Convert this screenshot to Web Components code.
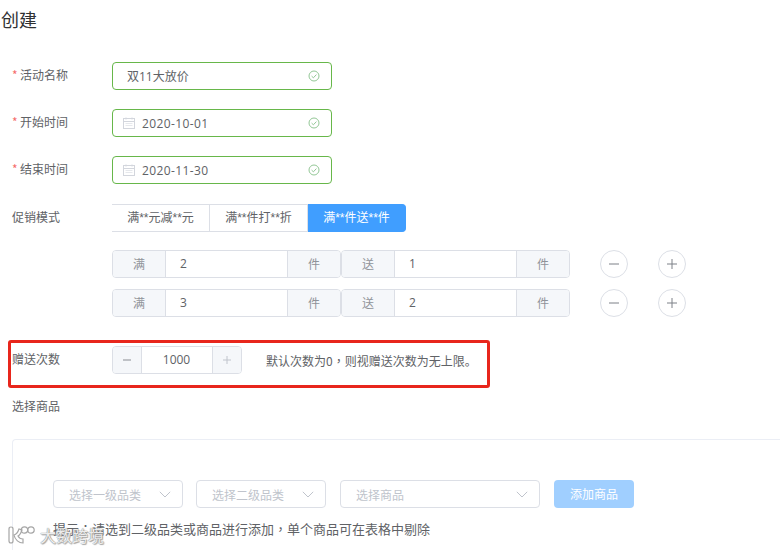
<!DOCTYPE html>
<html lang="zh">
<head>
<meta charset="utf-8">
<title>创建</title>
<style>
html,body{margin:0;padding:0;background:#fff;height:550px;overflow:hidden;}
body{font-family:"Noto Sans CJK SC","Noto Sans",sans-serif;font-size:12px;color:#606266;}
.p{font-family:"Noto Sans CJK TC",sans-serif;}
</style>
</head>
<body>
<promo-page>
  <form-row label="活动名称" required top="62"><text-field value="双11大放价"></text-field></form-row>
  <form-row label="开始时间" required top="19"><text-field value="2020-10-01" date></text-field></form-row>
  <form-row label="结束时间" required top="19"><text-field value="2020-11-30" date></text-field></form-row>
  <form-row label="促销模式" top="20">
    <seg-group options="满**元减**元|满**件打**折|满**件送**件" active="2"></seg-group>
  </form-row>
  <form-row top="18"><rule-row a="2" b="1"></rule-row></form-row>
  <form-row top="11"><rule-row a="3" b="2"></rule-row></form-row>
  <form-row label="赠送次数" top="29">
    <num-stepper value="1000"></num-stepper>
    <span style="margin-left:24px;color:#606266">默认次数为0<span class="p" lang="zh-Hant">，</span>则视赠送次数为无上限。</span>
  </form-row>
  <form-row label="选择商品" top="19"></form-row>
  <goods-card></goods-card>
</promo-page>

<script>
const checkIcon = `<svg width="12" height="12" viewBox="0 0 12 12" fill="none" stroke="#93c796" stroke-width="1"><circle cx="6" cy="6" r="5"/><path d="M3.6 6.1l1.8 1.7 3-3.2"/></svg>`;
const dateIcon = `<svg width="12" height="12" viewBox="0 0 12 12" fill="none" stroke="#d3d6dd" stroke-width="1"><rect x=".5" y="1.5" width="11" height="10"/><path d="M.5 4.500h11M3 .5v2M9 .5v2"/><path d="M2.500 6.500h7M2.500 8.500h7" stroke="#e6e8ec"/></svg>`;
const arrowIcon = `<svg width="12" height="7" viewBox="0 0 12 7" fill="none" stroke="#c0c4cc" stroke-width="1"><path d="M.8 .8L6 6l5.2-5.2"/></svg>`;

class PromoPage extends HTMLElement{
  constructor(){
    super();
    this.attachShadow({mode:'open'});
    this.shadowRoot.innerHTML=`
    <style>
    :host{display:block;position:relative;width:780px;height:550px;overflow:hidden;}
    h1{margin:0;height:0;font-size:18px;font-weight:400;line-height:24px;color:#303133;padding-left:1px;position:relative;top:7px;}
    .box{position:absolute;left:8px;top:340px;width:476px;height:42px;border:3px solid #e8261c;border-radius:3px;}
    .mark{position:absolute;left:8px;top:524px;display:flex;align-items:center;gap:5px;color:rgba(255,255,255,.85);font-size:16px;line-height:22px;
      text-shadow:0 0 1px #888,0 0 1px #999,1px 1px 1px #aaa;}
    .mark svg{display:block;}
    </style>
    <h1>创建</h1>
    <slot></slot>
    <div class="box"></div>
    <div class="mark">
      <svg width="27" height="20" viewBox="0 0 27 20" fill="#fff" stroke="#a6a6a6" stroke-width="1.2"><path d="M1 4q0-2 2-2t2 2v12q0 2-2 2t-2-2z"/><path d="M6 10c3-1 4-3 5-6l3 1c-1 3-2 5-4 6 1 2 3 3 5 3v4c-4 0-8-3-9-8z"/><circle cx="16.500" cy="5" r="3.200" fill="none"/><circle cx="23" cy="5" r="3.200" fill="none"/></svg>
      <span>大数跨境</span>
    </div>`;
  }
}

class FormRow extends HTMLElement{
  constructor(){
    super();
    this.attachShadow({mode:'open'});
    this.shadowRoot.innerHTML=`
    <style>
    :host{display:flex;height:28px;align-items:flex-start;padding-left:12px;}
    .label{width:100px;flex:none;line-height:26px;color:#606266;white-space:nowrap;}
    .star{display:inline-block;width:8px;color:#f56c6c;}
    .body{display:flex;align-items:center;height:28px;}
    </style>
    <div class="label"></div>
    <div class="body"><slot></slot></div>`;
  }
  connectedCallback(){
    const l=this.shadowRoot.querySelector('.label');
    const req=this.hasAttribute('required');
    l.innerHTML=(req?'<span class="star">*</span>':'')+(this.getAttribute('label')||'');
    this.style.marginTop=(this.getAttribute('top')||0)+'px';
  }
}

class TextField extends HTMLElement{
  constructor(){
    super();
    this.attachShadow({mode:'open'});
    this.shadowRoot.innerHTML=`
    <style>
    :host{display:flex;align-items:center;box-sizing:border-box;width:220px;height:28px;border:1px solid #67b74a;border-radius:4px;background:#fff;color:#606266;padding:0 11px 0 10px;font-family:"Open Sans","Noto Sans CJK SC",sans-serif;}
    .ic{display:flex;margin-right:7px;}
    .val{flex:1;}
    .val.date{letter-spacing:.4px;}
    .val.plain{padding-left:4px;}
    .ok{display:flex;}
    </style>
    <span class="ic"></span><span class="val"></span><span class="ok">${checkIcon}</span>`;
  }
  connectedCallback(){
    const v=this.shadowRoot.querySelector('.val');
    v.textContent=this.getAttribute('value');
    const ic=this.shadowRoot.querySelector('.ic');
    if(this.hasAttribute('date')){ ic.innerHTML=dateIcon; v.classList.add('date'); }
    else { ic.remove(); v.classList.add('plain'); }
  }
}

class SegGroup extends HTMLElement{
  constructor(){
    super();
    this.attachShadow({mode:'open'});
    this.shadowRoot.innerHTML=`
    <style>
    :host{display:flex;height:28px;font-family:"Liberation Sans","Noto Sans CJK SC",sans-serif;}
    div{box-sizing:border-box;width:98px;height:28px;line-height:26px;text-align:center;border:1px solid #dcdfe6;border-left:none;color:#606266;background:#fff;white-space:nowrap;}
    div:first-child{border-left:1px solid #dcdfe6;border-radius:4px 0 0 4px;}
    div:last-child{border-radius:0 4px 4px 0;}
    div.on{background:#409eff;border-color:#409eff;color:#fff;}
    </style>`;
  }
  connectedCallback(){
    const act=+this.getAttribute('active');
    this.getAttribute('options').split('|').forEach((t,i)=>{
      const d=document.createElement('div');
      d.textContent=t;
      if(i==act) d.className='on';
      this.shadowRoot.appendChild(d);
    });
  }
}

class AddonInput extends HTMLElement{
  constructor(){
    super();
    this.attachShadow({mode:'open'});
    this.shadowRoot.innerHTML=`
    <style>
    :host{display:flex;box-sizing:border-box;width:229px;height:28px;border:1px solid #dcdfe6;border-radius:4px;overflow:hidden;line-height:26px;color:#606266;}
    .add{width:52px;flex:none;text-align:center;background:#f5f7fa;color:#909399;}
    .pre{border-right:1px solid #dcdfe6;}
    .post{border-left:1px solid #dcdfe6;}
    .val{flex:1;padding-left:14px;font-family:"Open Sans",sans-serif;}
    </style>
    <span class="add pre"></span><span class="val"></span><span class="add post"></span>`;
  }
  connectedCallback(){
    this.shadowRoot.querySelector('.pre').textContent=this.getAttribute('pre');
    this.shadowRoot.querySelector('.val').textContent=this.getAttribute('value');
    this.shadowRoot.querySelector('.post').textContent=this.getAttribute('post');
  }
}

class RoundBtn extends HTMLElement{
  constructor(){
    super();
    this.attachShadow({mode:'open'});
    this.shadowRoot.innerHTML=`
    <style>
    :host{display:flex;align-items:center;justify-content:center;box-sizing:border-box;width:28px;height:28px;border:1px solid #dcdfe6;border-radius:50%;background:#fff;}
    svg{display:block;}
    </style>`;
  }
  connectedCallback(){
    const plus=this.getAttribute('kind')=='plus';
    this.shadowRoot.innerHTML+=`<svg width="10" height="10" viewBox="0 0 10 10" stroke="#7d8087" stroke-width="1"><path d="M0 5h10${plus?'M5 0v10':''}"/></svg>`;
  }
}

class RuleRow extends HTMLElement{
  constructor(){
    super();
    this.attachShadow({mode:'open'});
    this.shadowRoot.innerHTML=`
    <style>
    :host{display:flex;align-items:center;}
    .gap1{margin-left:30px;}
    .gap2{margin-left:30px;}
    </style>
    <addon-input pre="满" post="件" class="a"></addon-input>
    <addon-input pre="送" post="件" class="b"></addon-input>
    <round-btn kind="minus" class="gap1"></round-btn>
    <round-btn kind="plus" class="gap2"></round-btn>`;
  }
  connectedCallback(){
    this.shadowRoot.querySelector('.a').setAttribute('value',this.getAttribute('a'));
    this.shadowRoot.querySelector('.b').setAttribute('value',this.getAttribute('b'));
    this.shadowRoot.querySelector('.a').connectedCallback();
    this.shadowRoot.querySelector('.b').connectedCallback();
  }
}

class NumStepper extends HTMLElement{
  constructor(){
    super();
    this.attachShadow({mode:'open'});
    this.shadowRoot.innerHTML=`
    <style>
    :host{display:flex;box-sizing:border-box;width:130px;height:28px;border:1px solid #dcdfe6;border-radius:4px;overflow:hidden;line-height:26px;color:#606266;}
    .b{width:28px;flex:none;background:#f5f7fa;display:flex;align-items:center;justify-content:center;}
    .minus{border-right:1px solid #dcdfe6;}
    .plus{border-left:1px solid #dcdfe6;}
    .val{flex:1;text-align:center;font-family:"Open Sans",sans-serif;padding-right:1px;}
    </style>
    <span class="b minus"><svg width="8" height="8" viewBox="0 0 8 8" stroke="#8a8d93"><path d="M0 4h8"/></svg></span>
    <span class="val"></span>
    <span class="b plus"><svg width="8" height="8" viewBox="0 0 8 8" stroke="#c0c4cc"><path d="M0 4h8M4 0v8"/></svg></span>`;
  }
  connectedCallback(){
    this.shadowRoot.querySelector('.val').textContent=this.getAttribute('value');
  }
}

class SelectBox extends HTMLElement{
  constructor(){
    super();
    this.attachShadow({mode:'open'});
    this.shadowRoot.innerHTML=`
    <style>
    :host{display:flex;align-items:center;justify-content:space-between;box-sizing:border-box;height:28px;border:1px solid #dcdfe6;border-radius:4px;padding:0 11px 0 15px;color:#c0c4cc;background:#fff;}
    svg{display:block;}
    </style>
    <span></span>${arrowIcon}`;
  }
  connectedCallback(){
    this.shadowRoot.querySelector('span').textContent=this.getAttribute('text');
    this.style.width=this.getAttribute('w')+'px';
  }
}

class GoodsCard extends HTMLElement{
  constructor(){
    super();
    this.attachShadow({mode:'open'});
    this.shadowRoot.innerHTML=`
    <style>
    :host{display:block;box-sizing:border-box;margin:18px 0 0 12px;width:800px;height:120px;border:1px solid #ebeef5;border-right:none;border-radius:4px 0 0 0;padding:40px 0 0 40px;}
    .line{display:flex;align-items:center;}
    .line > *{margin-right:14px;}
    .line > :first-child{margin-right:13px;}
    .add{box-sizing:border-box;width:80px;height:28px;line-height:28px;text-align:center;background:#a0cfff;color:#fff;border-radius:4px;}
    .tip{margin-top:11px;font-size:13px;line-height:20px;color:#606266;white-space:nowrap;}
    .p{font-family:"Noto Sans CJK TC",sans-serif;}
    </style>
    <div class="line">
      <select-box text="选择一级品类" w="130"></select-box>
      <select-box text="选择二级品类" w="130"></select-box>
      <select-box text="选择商品" w="200"></select-box>
      <div class="add">添加商品</div>
    </div>
    <div class="tip">提示<span class="p" lang="zh-Hant">：</span>请选到二级品类或商品进行添加<span class="p" lang="zh-Hant">，</span>单个商品可在表格中剔除</div>`;
  }
}

customElements.define('promo-page',PromoPage);
customElements.define('form-row',FormRow);
customElements.define('text-field',TextField);
customElements.define('seg-group',SegGroup);
customElements.define('addon-input',AddonInput);
customElements.define('round-btn',RoundBtn);
customElements.define('rule-row',RuleRow);
customElements.define('num-stepper',NumStepper);
customElements.define('select-box',SelectBox);
customElements.define('goods-card',GoodsCard);
</script>
</body>
</html>
